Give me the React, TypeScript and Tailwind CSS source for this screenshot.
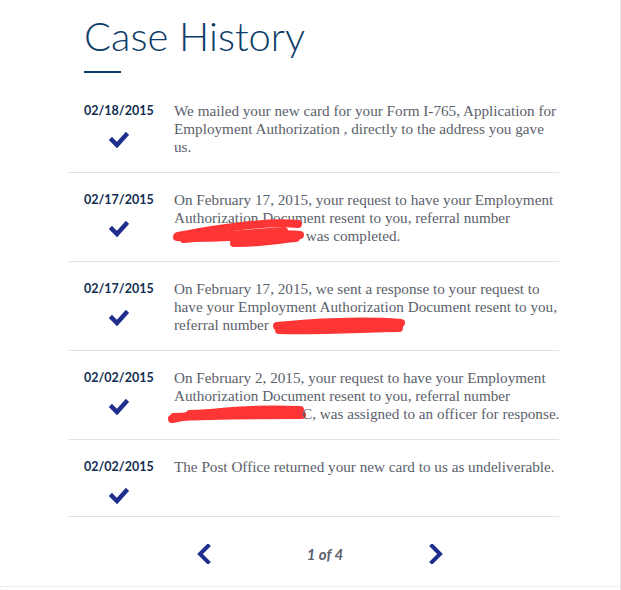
import React from 'react';

type Entry = {
  date: string;
  lines: React.ReactNode[];
};

function Scribble({ width, d, className = '' }: { width: number; d: string[]; className?: string }) {
  return (
    <svg
      width={width}
      height={18}
      viewBox={`0 0 ${width} 18`}
      className={`inline-block align-[-4px] overflow-visible ${className}`}
    >
      {d.map((p, i) => (
        <path key={i} d={p} fill="none" stroke="#fd3535" strokeWidth={8} strokeLinecap="round" strokeLinejoin="round" />
      ))}
    </svg>
  );
}

const entries: Entry[] = [
  {
    date: '02/18/2015',
    lines: [
      'We mailed your new card for your Form I-765, Application for',
      'Employment Authorization , directly to the address you gave',
      'us.',
    ],
  },
  {
    date: '02/17/2015',
    lines: [
      'On February 17, 2015, your request to have your Employment',
      'Authorization Document resent to you, referral number',
      <>
        <Scribble
          width={128}
          d={[
            'M4 9 C40 2 90 -6 124 -3',
            'M3 10 C50 14 100 4 126 8',
            'M60 16 C80 17 100 13 122 11',
            'M10 12 C50 8 80 6 110 4',
          ]}
        />{' '}
        was completed.
      </>,
    ],
  },
  {
    date: '02/17/2015',
    lines: [
      'On February 17, 2015, we sent a response to your request to',
      'have your Employment Authorization Document resent to you,',
      <>
        referral number{' '}
        <Scribble
          width={130}
          d={['M4 10 C40 6 90 4 128 7', 'M6 14 C50 15 100 12 126 12', 'M8 12 C50 10 90 9 124 9']}
        />
      </>,
    ],
  },
  {
    date: '02/02/2015',
    lines: [
      'On February 2, 2015, your request to have your Employment',
      'Authorization Document resent to you, referral number',
      <>
        <Scribble
          width={132}
          className="-ml-[4px]"
          d={['M2 14 C40 6 90 3 130 5', 'M4 12 C50 10 100 10 132 10', 'M20 9 C60 7 100 7 128 8']}
        />
        C, was assigned to an officer for response.
      </>,
    ],
  },
  {
    date: '02/02/2015',
    lines: ['The Post Office returned your new card to us as undeliverable.'],
  },
];

function Check() {
  return (
    <svg width="20" height="16" viewBox="0 0 20 16">
      <path d="M3 8 L8 13 L17 3" fill="none" stroke="#1f2e8c" strokeWidth={4.5} strokeLinecap="square" />
    </svg>
  );
}

function Chevron({ dir }: { dir: 'left' | 'right' }) {
  return (
    <svg width="14" height="20" viewBox="0 0 14 20">
      <path
        d={dir === 'left' ? 'M11 2 L3 10 L11 18' : 'M3 2 L11 10 L3 18'}
        fill="none"
        stroke="#1f2e8c"
        strokeWidth={4}
        strokeLinecap="square"
      />
    </svg>
  );
}

export default function App() {
  return (
    <div className="w-[621px] h-[590px] bg-white border-r border-[#e6e6e6] overflow-hidden">
      <div className="h-[587px] border-b border-dotted border-[#dddddd] pl-[69px] pr-[61px]">
        {/* Heading */}
        <div className="pl-[15px] pt-[11px]">
          <h1 className="font-['Lato',sans-serif] font-light text-[40px] leading-[50px] text-[#0c3c68]">Case History</h1>
          <div className="mt-[10px] w-[37px] h-[2px] bg-[#0c3c68]" />
        </div>

        {/* Timeline */}
        <div className="mt-[18px]">
          {entries.map((e, i) => (
            <div
              key={i}
              className={`flex pb-[12px] ${i === 0 ? 'pt-[11px]' : 'pt-[18px]'} border-b border-[#e2e2e2]`}
            >
              <div className="w-[105px] shrink-0 pl-[15px] flex flex-col">
                <div className="font-['Lato',sans-serif] font-bold text-[12.5px] leading-[18px] text-[#112e51] w-[69px] text-center">
                  {e.date}
                </div>
                <div className="mt-[12px] w-[69px] flex justify-center">
                  <Check />
                </div>
              </div>
              <div className="flex-1 min-w-0 pb-[4px] font-['Liberation_Serif',serif] text-[15.2px] leading-[18px] text-[#5b616b] whitespace-nowrap">
                {e.lines.map((l, j) => (
                  <div key={j}>{l}</div>
                ))}
              </div>
            </div>
          ))}
        </div>

        {/* Pagination */}
        <div className="flex items-center mt-[26px] pl-[128px]">
          <button className="w-[14px]">
            <Chevron dir="left" />
          </button>
          <span className="ml-[94px] w-[40px] font-['Lato',sans-serif] font-bold italic text-[15px] text-[#5b616b] text-center">
            1 of 4
          </span>
          <button className="w-[14px] ml-[84px]">
            <Chevron dir="right" />
          </button>
        </div>
      </div>
    </div>
  );
}
